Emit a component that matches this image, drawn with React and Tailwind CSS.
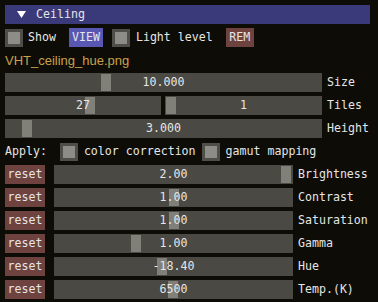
const mono = { fontFamily: '"DejaVu Sans Mono", "Liberation Mono", monospace' };

function Checkbox() {
  return (
    <div className="w-[18px] h-[18px] bg-[#4f4e48] p-[3px] shrink-0">
      <div className="w-full h-full bg-[#8d8c87]" />
    </div>
  );
}

function Slider({ width, grab, value }) {
  return (
    <div
      className="relative h-[19px] bg-[#4a4943] shrink-0 flex items-center justify-center"
      style={{ width }}
    >
      <div
        className="absolute top-[1px] bottom-[1px] w-[10px] bg-[#807f78]"
        style={{ left: grab }}
      />
      <span className="relative whitespace-pre">{value}</span>
    </div>
  );
}

function ResetRow({ grab, value, label }) {
  return (
    <div className="flex items-center h-[19px]">
      <div className="w-[40px] h-[19px] bg-[#6e423e] flex items-center justify-center shrink-0">
        reset
      </div>
      <div className="ml-[9px]">
        <Slider width={239} grab={grab} value={value} />
      </div>
      <span className="ml-[5px]">{label}</span>
    </div>
  );
}

export default function App() {
  const rows = [
    { grab: 227, value: "2.00", label: "Brightness" },
    { grab: 115, value: "1.00", label: "Contrast" },
    { grab: 115, value: "1.00", label: "Saturation" },
    { grab: 77, value: "1.00", label: "Gamma" },
    { grab: 103, value: "-18.40", label: "Hue" },
    { grab: 114, value: "6500", label: "Temp.(K)" },
  ];

  return (
    <div
      className="w-[378px] h-[302px] bg-[#0d0c06] text-[#e6e6e6] text-[11.6px] leading-none pt-[5px] pl-[5px] overflow-hidden"
      style={mono}
    >
      <div className="w-[365px] flex flex-col gap-[4px]">
        {/* header */}
        <div className="h-[19px] bg-[#3a3a7a] flex items-center">
          <svg width="10" height="8" viewBox="0 0 10 8" className="ml-[12px]">
            <polygon points="0,0 9,0 4.5,7" fill="#ffffff" />
          </svg>
          <span className="ml-[9px]">Ceiling</span>
        </div>

        {/* toggles */}
        <div className="flex items-center h-[19px]">
          <Checkbox />
          <span className="ml-[5px]">Show</span>
          <div className="ml-[13px] w-[34px] h-[19px] bg-[#5858b4] flex items-center justify-center">
            VIEW
          </div>
          <div className="ml-[9px]">
            <Checkbox />
          </div>
          <span className="ml-[6px]">Light level</span>
          <div className="ml-[13px] w-[28px] h-[19px] bg-[#6e423e] flex items-center justify-center">
            REM
          </div>
        </div>

        {/* file name */}
        <div
          className="h-[18px] flex items-center text-[13px] text-[#c8a24e]"
          style={{ fontFamily: '"Liberation Sans", Arial, sans-serif' }}
        >
          VHT_ceiling_hue.png
        </div>

        <div className="flex items-center h-[19px]">
          <Slider width={317} grab={96} value="10.000" />
          <span className="ml-[5px]">Size</span>
        </div>

        <div className="flex items-center h-[19px]">
          <Slider width={156} grab={80} value="27" />
          <div className="ml-[4px]">
            <Slider width={157} grab={1} value="1" />
          </div>
          <span className="ml-[5px]">Tiles</span>
        </div>

        <div className="flex items-center h-[19px]">
          <Slider width={317} grab={17} value="3.000" />
          <span className="ml-[5px]">Height</span>
        </div>

        {/* apply */}
        <div className="flex items-center h-[19px]">
          <span>Apply:</span>
          <div className="ml-[13px]">
            <Checkbox />
          </div>
          <span className="ml-[6px]">color correction</span>
          <div className="ml-[6px]">
            <Checkbox />
          </div>
          <span className="ml-[6px]">gamut mapping</span>
        </div>

        {rows.map((r) => (
          <ResetRow key={r.label} {...r} />
        ))}
      </div>
    </div>
  );
}
